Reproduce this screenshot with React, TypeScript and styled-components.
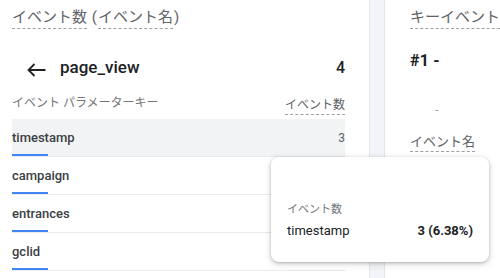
import React from "react";
import styled, { createGlobalStyle } from "styled-components";

const GlobalStyle = createGlobalStyle`
  html, body {
    margin: 0;
    padding: 0;
    background: #ffffff;
  }
  body {
    font-family: Roboto, "Noto Sans CJK JP", sans-serif;
    color: #3c4043;
  }
`;

/* Styles */
const Page = styled.div`
  position: relative;
  display: flex;
  width: 500px;
  height: 278px;
  overflow: hidden;
  background: #ffffff;
`;

const LeftCard = styled.section`
  flex: none;
  width: 369px;
  box-sizing: border-box;
  padding: 7px 24px 0 12px;
`;

const Gutter = styled.div`
  width: 16px;
  flex: none;
  box-sizing: border-box;
  background: #f3f4f7;
  border-left: 1px solid #e3e5e8;
  border-right: 1px solid #e3e5e8;
`;

const RightCard = styled.section`
  flex: 1;
  min-width: 0;
  box-sizing: border-box;
  padding: 7px 0 0 25px;
`;

const Dashed = styled.span<{ $size?: number }>`
  display: inline-block;
  font-size: ${(p) => p.$size || 15}px;
  line-height: ${(p) => (p.$size ? p.$size + 6 : 21)}px;
  color: #5f6368;
  border-bottom: 1px dashed #9aa0a6;
`;

const CardTitle = styled.div`
  display: flex;
  align-items: flex-start;
  height: 22px;
  font-size: 15px;
  line-height: 21px;
  color: #5f6368;
  white-space: nowrap;
`;

const Paren = styled.span`
  padding: 0 1px;
`;

const TitleRow = styled.div`
  display: flex;
  align-items: center;
  height: 24px;
  margin-top: 26px;
  padding-left: 15px;
`;

const BackArrow = styled.svg`
  width: 19px;
  height: 14px;
  margin-right: 14px;
  margin-top: 5px;
`;

const EventName = styled.div`
  flex: 1;
  font-size: 17px;
  font-weight: 500;
  color: #202124;
`;

const Total = styled.div`
  font-size: 16px;
  font-weight: 500;
  color: #202124;
`;

const HeaderRow = styled.div`
  display: flex;
  justify-content: space-between;
  align-items: flex-end;
  height: 24px;
  margin-top: 12px;
  font-size: 12px;
  color: #757575;
`;

const HeaderLabel = styled.span`
  line-height: 18px;
  padding-bottom: 3px;
`;

const Rows = styled.div`
  margin-top: 4px;
`;

const Row = styled.div<{ $active?: boolean }>`
  position: relative;
  display: flex;
  align-items: center;
  justify-content: space-between;
  height: 38px;
  box-sizing: border-box;
  border-bottom: 1px solid #e8eaed;
  background: ${(p) => (p.$active ? "#f1f3f4" : "transparent")};
  font-size: 13px;
  font-weight: 500;
  color: #3c4043;
`;

const RowBar = styled.div`
  position: absolute;
  left: 0;
  bottom: 0;
  width: 36px;
  height: 2px;
  background: #4285f4;
`;

const RowValue = styled.span`
  font-size: 12px;
  font-weight: 400;
  color: #5f6368;
`;

const KeyTitle = styled.div`
  margin-top: 22px;
  font-size: 16px;
  font-weight: 700;
  color: #202124;
  letter-spacing: 0.2px;
`;

const Dash = styled.div`
  margin: 33px 0 0 25px;
  font-size: 12px;
  color: #9aa0a6;
`;

const KeyLabel = styled.div`
  margin-top: 14px;
`;

const Tooltip = styled.div`
  position: absolute;
  left: 271px;
  top: 157px;
  width: 218px;
  height: 105px;
  box-sizing: border-box;
  padding: 45px 16px 0 16px;
  background: #ffffff;
  border-radius: 8px;
  box-shadow: 0 1px 3px rgba(60, 64, 67, 0.3), 0 2px 6px 1px rgba(60, 64, 67, 0.15);
`;

const TipLabel = styled.div`
  font-size: 11px;
  color: #70757a;
  line-height: 16px;
`;

const TipRow = styled.div`
  display: flex;
  justify-content: space-between;
  margin-top: 5px;
  font-size: 13px;
  color: #202124;
`;

const TipValue = styled.span`
  font-weight: 700;
`;

const rows = ["timestamp", "campaign", "entrances", "gclid"];

const App = () => {
  return (
    <Page>
      <GlobalStyle />
      <LeftCard>
        <CardTitle>
          <Dashed>イベント数</Dashed>
          <Paren>&nbsp;(</Paren>
          <Dashed>イベント名</Dashed>
          <Paren>)</Paren>
        </CardTitle>
        <TitleRow>
          <BackArrow viewBox="0 0 19 14">
            <path
              d="M18.5 7H1.5M7.5 1L1.5 7l6 6"
              fill="none"
              stroke="#202124"
              strokeWidth="1.8"
            />
          </BackArrow>
          <EventName>page_view</EventName>
          <Total>4</Total>
        </TitleRow>
        <HeaderRow>
          <HeaderLabel>イベント パラメーターキー</HeaderLabel>
          <Dashed $size={12}>イベント数</Dashed>
        </HeaderRow>
        <Rows>
          {rows.map((name, i) => (
            <Row key={name} $active={i === 0}>
              <span>{name}</span>
              {i === 0 && <RowValue>3</RowValue>}
              <RowBar />
            </Row>
          ))}
        </Rows>
      </LeftCard>
      <Gutter />
      <RightCard>
        <CardTitle>
          <Dashed>キーイベント</Dashed>
        </CardTitle>
        <KeyTitle>#1 -</KeyTitle>
        <Dash>-</Dash>
        <KeyLabel>
          <Dashed $size={13}>イベント名</Dashed>
        </KeyLabel>
      </RightCard>
      <Tooltip>
        <TipLabel>イベント数</TipLabel>
        <TipRow>
          <span>timestamp</span>
          <TipValue>3 (6.38%)</TipValue>
        </TipRow>
      </Tooltip>
    </Page>
  );
};

export default App;
